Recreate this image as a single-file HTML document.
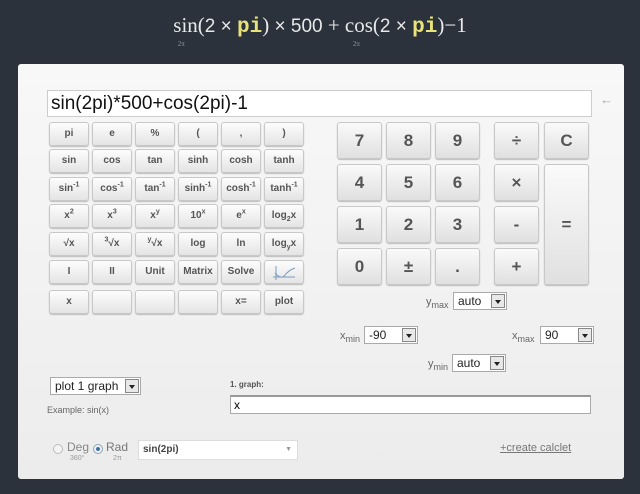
<!DOCTYPE html><html><head><style>
*{box-sizing:border-box;margin:0;padding:0}
body{width:640px;height:494px;background:#2b323c;font-family:"Liberation Sans",sans-serif;position:relative;overflow:hidden}
.a{position:absolute}
.f{top:12px;left:0;width:640px;text-align:center;color:#e8e8e8;font-family:"Liberation Serif",serif;font-size:21px;line-height:26px}
.f .p{color:#e8e27a;font-family:"Liberation Mono",monospace;font-weight:bold}
.f .k{font-family:"Liberation Sans",sans-serif;font-size:19px}
.f sub{font-size:7px;color:#999;position:relative;left:-20px;top:9px;display:inline-block;width:0;line-height:0}
.pan{left:18px;top:64px;width:606px;height:415px;background:linear-gradient(#f8f8f8,#ececec);border-radius:3px}
.b{position:absolute;width:40px;height:24px;border:1px solid #c8c8c8;border-radius:3px;background:linear-gradient(#fdfdfd,#e4e4e4);font-size:10px;font-weight:bold;color:#555;text-align:center;line-height:22px;box-shadow:0 1px 1px #bbb}
.b sup,.b sub{font-size:7px;line-height:0}
.n{position:absolute;width:45px;height:37px;border:1px solid #c8c8c8;border-radius:3px;background:linear-gradient(#fafafa,#e0e0e0);font-size:17px;font-weight:bold;color:#555;text-align:center;line-height:35px;box-shadow:0 1px 1px #bbb}
.s{position:absolute;height:18px;background:#fff;border:1px solid #aaa;font-size:12px;line-height:16px;padding-left:4px;color:#222}
.s i{position:absolute;right:1px;top:1px;width:14px;height:14px;border:1px solid #888;background:#e8e8e8}
.s i:after{content:"";position:absolute;left:3px;top:5px;border:3px solid transparent;border-top:4px solid #222}
.l{font-size:11px;color:#666}.l sub{font-size:9px;line-height:0}
</style></head><body>
<div class="a f">sin<sub>2π</sub>(<span class="k">2 × </span><span class="p">pi</span>) <span class="k">× 500</span> + cos<sub>2π</sub>(<span class="k">2 × </span><span class="p">pi</span>)−1</div>
<div class="a pan"></div>
<div class="a" style="left:47px;top:90px;width:545px;height:27px;background:#fff;border:1px solid #ccc;font-size:19px;line-height:25px;padding-left:3px;color:#111">sin(2pi)*500+cos(2pi)-1</div>
<div class="a" style="left:600px;top:92px;color:#aaa;font-size:13px">←</div>
<div class="b" style="left:49px;top:122px">pi</div><div class="b" style="left:92px;top:122px">e</div><div class="b" style="left:135px;top:122px">%</div><div class="b" style="left:178px;top:122px">(</div><div class="b" style="left:221px;top:122px">,</div><div class="b" style="left:264px;top:122px">)</div>
<div class="b" style="left:49px;top:149px">sin</div><div class="b" style="left:92px;top:149px">cos</div><div class="b" style="left:135px;top:149px">tan</div><div class="b" style="left:178px;top:149px">sinh</div><div class="b" style="left:221px;top:149px">cosh</div><div class="b" style="left:264px;top:149px">tanh</div>
<div class="b" style="left:49px;top:177px">sin<sup>-1</sup></div><div class="b" style="left:92px;top:177px">cos<sup>-1</sup></div><div class="b" style="left:135px;top:177px">tan<sup>-1</sup></div><div class="b" style="left:178px;top:177px">sinh<sup>-1</sup></div><div class="b" style="left:221px;top:177px">cosh<sup>-1</sup></div><div class="b" style="left:264px;top:177px">tanh<sup>-1</sup></div>
<div class="b" style="left:49px;top:204px">x<sup>2</sup></div><div class="b" style="left:92px;top:204px">x<sup>3</sup></div><div class="b" style="left:135px;top:204px">x<sup>y</sup></div><div class="b" style="left:178px;top:204px">10<sup>x</sup></div><div class="b" style="left:221px;top:204px">e<sup>x</sup></div><div class="b" style="left:264px;top:204px">log<sub>2</sub>x</div>
<div class="b" style="left:49px;top:232px">√x</div><div class="b" style="left:92px;top:232px"><sup>3</sup>√x</div><div class="b" style="left:135px;top:232px"><sup>y</sup>√x</div><div class="b" style="left:178px;top:232px">log</div><div class="b" style="left:221px;top:232px">ln</div><div class="b" style="left:264px;top:232px">log<sub>y</sub>x</div>
<div class="b" style="left:49px;top:260px">I</div><div class="b" style="left:92px;top:260px">II</div><div class="b" style="left:135px;top:260px">Unit</div><div class="b" style="left:178px;top:260px">Matrix</div><div class="b" style="left:221px;top:260px">Solve</div><div class="b" style="left:264px;top:260px"><svg width="26" height="18" viewBox="0 0 26 18" style="margin-top:3px"><path d="M5 2V16M2 13H24M4 9Q10 16 14 11T24 4" stroke="#7a9cc0" fill="none" stroke-width="1"/></svg></div>
<div class="b" style="left:49px;top:290px">x</div><div class="b" style="left:92px;top:290px"></div><div class="b" style="left:135px;top:290px"></div><div class="b" style="left:178px;top:290px"></div><div class="b" style="left:221px;top:290px">x=</div><div class="b" style="left:264px;top:290px">plot</div>
<div class="n" style="left:337px;top:122px">7</div><div class="n" style="left:386px;top:122px">8</div><div class="n" style="left:435px;top:122px">9</div><div class="n" style="left:494px;top:122px">÷</div><div class="n" style="left:544px;top:122px">C</div>
<div class="n" style="left:337px;top:164px">4</div><div class="n" style="left:386px;top:164px">5</div><div class="n" style="left:435px;top:164px">6</div><div class="n" style="left:494px;top:164px">×</div>
<div class="n" style="left:544px;top:164px;height:121px;line-height:119px">=</div>
<div class="n" style="left:337px;top:206px">1</div><div class="n" style="left:386px;top:206px">2</div><div class="n" style="left:435px;top:206px">3</div><div class="n" style="left:494px;top:206px">-</div>
<div class="n" style="left:337px;top:248px">0</div><div class="n" style="left:386px;top:248px">±</div><div class="n" style="left:435px;top:248px">.</div><div class="n" style="left:494px;top:248px">+</div>
<div class="a l" style="left:426px;top:296px">y<sub>max</sub></div><div class="s" style="left:453px;top:292px;width:54px">auto<i></i></div>
<div class="a l" style="left:340px;top:330px">x<sub>min</sub></div><div class="s" style="left:364px;top:326px;width:54px">-90<i></i></div>
<div class="a l" style="left:512px;top:330px">x<sub>max</sub></div><div class="s" style="left:540px;top:326px;width:54px">90<i></i></div>
<div class="a l" style="left:428px;top:358px">y<sub>min</sub></div><div class="s" style="left:452px;top:354px;width:54px">auto<i></i></div>
<div class="s" style="left:50px;top:377px;width:91px">plot 1 graph<i></i></div>
<div class="a" style="left:47px;top:405px;font-size:9px;color:#666">Example: sin(x)</div>
<div class="a" style="left:230px;top:380px;font-size:8px;color:#555;font-weight:bold">1. graph:</div>
<div class="a" style="left:230px;top:395px;width:361px;height:19px;background:#fff;border:1px solid #aaa;border-top:2px solid #999;font-size:12px;padding-left:3px;line-height:16px">x</div>
<div class="a" style="left:53px;top:444px;width:10px;height:10px;border-radius:50%;border:1px solid #bbb;background:#f4f4f4"></div>
<div class="a" style="left:67px;top:440px;font-size:12px;color:#888">Deg</div><div class="a" style="left:70px;top:455px;font-size:7px;color:#999">360°</div>
<div class="a" style="left:93px;top:444px;width:10px;height:10px;border-radius:50%;border:1px solid #8aa;background:radial-gradient(#3a6d9a 30%,#eef 40%)"></div>
<div class="a" style="left:106px;top:440px;font-size:12px;color:#777">Rad</div><div class="a" style="left:113px;top:455px;font-size:7px;color:#999">2π</div>
<div class="a" style="left:138px;top:440px;width:160px;height:20px;background:#fff;border:1px solid #ddd;font-size:10px;font-weight:bold;color:#444;line-height:18px;padding-left:4px">sin(2pi)<span style="position:absolute;right:5px;color:#999;font-size:7px">▼</span></div>
<div class="a" style="left:500px;top:442px;font-size:11px;color:#777;text-decoration:underline">+create calclet</div>
</body></html>
